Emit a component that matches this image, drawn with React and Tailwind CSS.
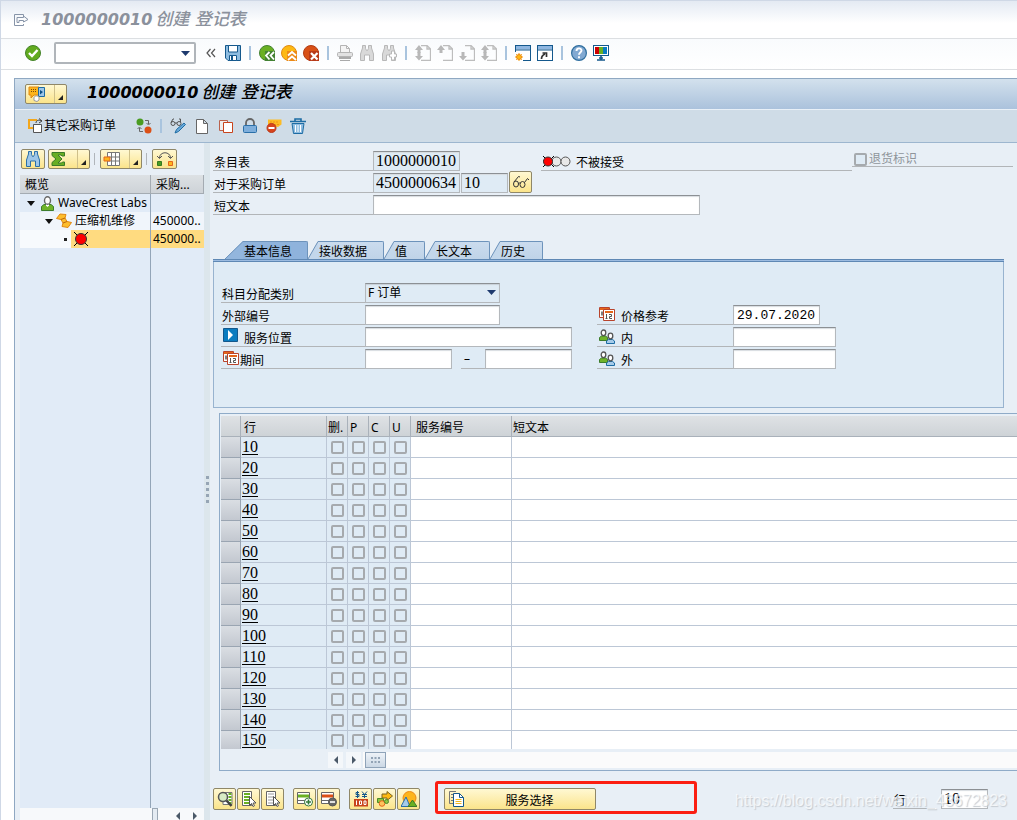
import { useState } from 'react';

const YELLOW_BTN = 'flex items-center justify-center border border-[#8f8768] rounded-[2px] bg-linear-to-b from-[#fff8d2] to-[#fbe48a] cursor-pointer shrink-0';
const FIELD = 'h-5 border border-[#b4b8bc] border-t-[#8c9094] px-[2px] outline-none shrink-0 shadow-[inset_0_1px_1px_#d8dce0] font-["Liberation_Serif"] text-[16px] leading-[18px] rounded-none';
const LABEL = 'flex items-end border-b border-[#b2b5b8] h-[22px] leading-[14px] shrink-0';

function Svg({ children, w = 16, h = 16 }) {
  return (
    <svg width={w} height={h} viewBox={`0 0 ${w} ${h}`} fill="none" aria-hidden="true" className="shrink-0 block">
      {children}
    </svg>
  );
}

const Exit = () => (
  <Svg><path d="M10.500 4V2.500h-9v11h9V12M4 5.500v5M4 5.500h6.500V4L15 7.500 10.500 10V8.500H6v2H4" stroke="#8794a8" /></Svg>
);

const Check = () => (
  <Svg>
    <circle cx="8" cy="8" r="7.500" fill="#62ab20" stroke="#44832a" />
    <path d="M4 8l3 3 5.500-6" stroke="#fff" strokeWidth="2.400" />
  </Svg>
);

const Save = () => (
  <Svg>
    <path d="M.5.500h15v15H3L.5 13z" fill="#8ebce0" stroke="#14588c" />
    <path d="M3.500.500h9v6.500h-9z" fill="#fff" stroke="#14588c" />
    <path d="M4.500 10.500h7v5h-7z" fill="#fff" stroke="#14588c" />
    <path d="M6 11h2v4H6z" fill="#14588c" />
  </Svg>
);

const Back = () => (
  <Svg>
    <circle cx="8" cy="8" r="7.500" fill="#6ab023" stroke="#448233" />
    <path d="M6 6h10v10H6z" fill="#448233" />
    <path d="M10.500 7L7 10.500l3.500 4M15 7l-3.500 3.500 3.500 4" stroke="#fff" strokeWidth="1.800" />
  </Svg>
);

const Up = () => (
  <Svg>
    <circle cx="8" cy="8" r="7.500" fill="#fdb913" stroke="#e08a14" />
    <path d="M6 6h10v10H6z" fill="#ec8a16" />
    <path d="M7 10.500L11 7l4 3.500M7 15l4-3.500 4 3.500" stroke="#fff" strokeWidth="1.800" />
  </Svg>
);

const Cancel = () => (
  <Svg>
    <circle cx="8" cy="8" r="7.500" fill="#d85016" stroke="#b13c14" />
    <path d="M6 6h10v10H6z" fill="#b83a18" />
    <path d="M8 8l6.500 6.500M14.500 8L8 14.500" stroke="#fff" strokeWidth="2.200" />
  </Svg>
);

const Printer = () => (
  <Svg>
    <path d="M3.500 7V.500h6l3 3V7M9.500.500v3h3" stroke="#b4b4b4" fill="#f4f4f4" />
    <rect x=".5" y="7.500" width="15" height="4" rx="1" fill="#e2e2e2" stroke="#b4b4b4" />
    <path d="M2 12h12v2H2zM3 15h10v1H3z" fill="#aaa" />
  </Svg>
);

const Glass = ({ color = '#b8b8b8', fill = '#d9d9d9', plus }) => (
  <Svg>
    <path d="M3.500 3V.500h3v2.800l1 2.200h1l1-2.200V.500h3V3l2 6v6.500h-4V10h-5v5.500h-4V9z" fill={fill} stroke={color} />
    {plus && <path d="M10.500 6h3v3h2v3h-2v3h-3v-3h-2V9h2z" fill="#fff" stroke={color} />}
  </Svg>
);

const PageMove = ({ up, down }) => (
  <Svg>
    <path d="M6 .500h6l3.500 3.500v11.500H6M12 .500V4h3.500" stroke="#bdbdbd" strokeWidth="1.300" />
    {up && <path d="M4 0l4 5H5.500v3h-3V5H0z" fill="#b8b8b8" />}
    {down && <path d="M4 15.500L0 11h2.500V7h3v4H8z" fill="#b8b8b8" />}
  </Svg>
);

const NewWindow = ({ shortcut }) => (
  <Svg>
    <rect x=".5" y=".5" width="15" height="15" fill="#fff" stroke="#14588c" />
    <path d="M1 1h14v3.500H1z" fill="#8eb6e0" />
    <path d="M1 5h14" stroke="#14588c" />
    {shortcut ? (
      <path d="M4.500 14c0-3 1-4 3.500-5M5.500 8h4v4" stroke="#333" strokeWidth="1.700" />
    ) : (
      <>
        <path d="M0 7h8v9H0z" fill="#fff" />
        <path d="M4 8v8M0 12h8M1.200 9.200l5.600 5.600M6.800 9.200l-5.600 5.600" stroke="#f39b12" />
        <circle cx="4" cy="12" r="2.500" fill="#fdb913" stroke="#f08a10" />
      </>
    )}
  </Svg>
);

const Help = () => (
  <Svg>
    <circle cx="8" cy="8" r="7.400" fill="#82a9d2" stroke="#306f9f" strokeWidth="1.200" />
    <path d="M5.500 6c0-3.500 5-3.300 5-.5C10.500 7.500 8 7.500 8 9.800M8 11.200v2" stroke="#fff" strokeWidth="1.900" />
  </Svg>
);

const Monitor = () => (
  <Svg>
    <rect x=".5" y=".5" width="15" height="10" fill="#fff" stroke="#14588c" />
    <path d="M2 2h4v7H2z" fill="#c00" /><path d="M6 2h4v7H6z" fill="#6ab023" /><path d="M10 2h4v7h-4z" fill="#0a7cc0" />
    <path d="M8 11v4M4 15h8M6 13h4" stroke="#14588c" strokeWidth="1.600" />
  </Svg>
);

const OtherPo = () => (
  <Svg>
    <path d="M9 2H1v8h4" stroke="#f3a71c" strokeWidth="2" />
    <path d="M5.500 6.500h8v8h-8z" fill="#fff" stroke="#555" />
    <path d="M8 5c0-3 3-3.500 6-2M11 .500l3 2.500-3 2" stroke="#444" />
  </Svg>
);

const Swap = () => (
  <Svg>
    <circle cx="4" cy="4" r="3.500" fill="#4a9c22" /><circle cx="12" cy="12" r="3.500" fill="#dc5016" />
    <path d="M9 2.500h3.500V6M10.500 5l2 2 2-2M7 13.500H3.500V10M1.500 11l2-2 2 2" stroke="#666" />
  </Svg>
);

const Change = () => (
  <Svg>
    <circle cx="3" cy="5.500" r="2" stroke="#555" /><circle cx="9" cy="5.500" r="2" stroke="#555" />
    <path d="M5 5h2M1 4.500L3 1h1M10.500 4V1H9" stroke="#555" />
    <path d="M14 5l1.500 1.500-7 7L5 15l1.500-3.500z" fill="#69a8d8" stroke="#1d6ca4" />
  </Svg>
);

const Blank = () => <Svg><path d="M2.500 1.500h7l4 4v10h-11zM9.500 1.500v4h4" fill="#fff" stroke="#666" /></Svg>;

const Copy = () => (
  <Svg>
    <path d="M1.500 2.500h8v10h-8z" fill="#eee" stroke="#b9624d" />
    <path d="M5.500 4.500h9v10h-9z" fill="#fff" stroke="#c8441c" />
  </Svg>
);

const Lock = () => (
  <Svg>
    <path d="M4 8V5a4 4 0 018 0v3" stroke="#666" strokeWidth="1.800" />
    <rect x="1.500" y="7.500" width="13" height="7" rx="1" fill="#7eaedb" stroke="#2a6fa8" />
  </Svg>
);

const Stop = () => (
  <Svg>
    <path d="M2 1.500h13.500v5L12 9 2 7z" fill="#fdbb24" />
    <path d="M4 4h9M8 6.500h5" stroke="#f09416" strokeDasharray="2 1" />
    <circle cx="5.500" cy="10" r="4.500" fill="#d8441c" stroke="#b9381a" />
    <path d="M2.500 10h6" stroke="#fff" strokeWidth="2" />
  </Svg>
);

const Trash = () => (
  <Svg>
    <path d="M0 3.500h16M5 3V1h6v2" stroke="#1d6ca4" strokeWidth="1.600" />
    <path d="M2 5.500h12l-1.500 10h-9z" fill="#8ebce0" stroke="#1d6ca4" />
    <path d="M5.500 7v7M8 7v7M10.500 7v7" stroke="#fff" />
  </Svg>
);

const ServiceMenu = () => (
  <Svg w={18}>
    <path d="M1 1h10v8H6l-3 3V9H1z" fill="#fdb51c" stroke="#e08812" />
    <path d="M3 3.500h6M3 5.500h6" stroke="#7a4b10" strokeDasharray="1 1" />
    <path d="M10.500 1.500h6v9h-6z" fill="#9dc6e8" stroke="#1d6ca4" />
    <path d="M12 4l3 2-3 2.500z" fill="#0a4f86" />
    <path d="M6 12c0-2 3-3 5-1v3l-2 1.500-3-1z" fill="#fff" stroke="#999" />
  </Svg>
);

const Sigma = () => (
  <Svg><path d="M1 1.500h12.500v3.500H11l-1-1H7l4 4-4 4h3.500l1-1h2v3.500H1v-3L5 8 1 4.500z" fill="#68ae24" stroke="#3b7a2a" /></Svg>
);

const Columns = () => (
  <Svg w={18}>
    <path d="M4.500 1.500h12v13h-12zM4.500 6h12M4.500 10h12M8.500 1v13M12.500 1v13" fill="#fff" stroke="#777" />
    <path d="M1 6h6v4H1z" fill="#fdb51c" stroke="#e4651a" />
  </Svg>
);

const Exchange = () => (
  <Svg w={18}>
    <path d="M3.500 7C3.500 0 14.500 0 14.500 7M1 5l2.500 2.500L6 5M12 5l2.500 2.500L17 5" stroke="#555" />
    <path d="M1.500 10.500h4v4h-4z" fill="#4a9c22" stroke="#347a22" />
    <path d="M12.500 10.500h4v4h-4z" fill="#fdb51c" stroke="#e4651a" />
  </Svg>
);

const Person = () => (
  <Svg w={13} h={15}>
    <path d="M.5 14.500V10.500L3 8.500h7l2.500 2v4z" fill="#6fb32a" stroke="#3c7d2c" />
    <path d="M5 7h3v2.500l-1.500 1.500L5 9.500z" fill="#fff" />
    <ellipse cx="6.500" cy="4.500" rx="3" ry="3.800" fill="#fff" stroke="#666" strokeWidth="1.400" />
  </Svg>
);

const Folded = () => (
  <Svg>
    <path d="M.5 5.500L4 1l6 .5L9 5l2 3.500 4.500 1L12 14.500l-6-1L7 10 5 6.500z" fill="#fdbd2c" stroke="#e08812" />
    <path d="M9 5L5 6.500M11 8.500L7 10" stroke="#b8640c" />
  </Svg>
);

const RedLight = () => (
  <Svg w={14} h={14}>
    <path d="M0 0l14 14M14 0L0 14" stroke="#000" />
    <circle cx="7" cy="7" r="5.500" fill="#f00" stroke="#333" />
  </Svg>
);

const TrafficLight = () => (
  <Svg w={30} h={13}>
    <path d="M1 1l11 11M12 1L1 12M1 6h11" stroke="#000" />
    <circle cx="14.500" cy="6.500" r="4.500" fill="#e8e8e8" stroke="#555" />
    <circle cx="23.500" cy="6.500" r="4.500" fill="#e8e8e8" stroke="#555" />
    <circle cx="6" cy="6.500" r="4.500" fill="#f00" stroke="#333" />
  </Svg>
);

const Glasses = () => (
  <Svg w={18}>
    <ellipse cx="4" cy="10" rx="2.500" ry="3" stroke="#333" />
    <ellipse cx="10.500" cy="10.500" rx="2.500" ry="3" stroke="#333" />
    <path d="M2 8l4.500-5.500L8 3M6.500 9.500c.5-1 1-1 1.500 0M12.500 8.500l3-4L17 6" stroke="#333" />
  </Svg>
);

const DateIcon = () => (
  <Svg>
    <path d="M.5 1.500h10v10H.5z" fill="#fff" stroke="#b8442c" />
    <path d="M1 3h9" stroke="#e4651a" strokeWidth="2" />
    <path d="M3 5.500v4" stroke="#555" strokeWidth="1.500" />
    <path d="M4.500 3.500h11v11h-11z" fill="#fff" stroke="#b8442c" />
    <path d="M6 6h8" stroke="#e4651a" strokeWidth="2" />
    <path d="M7.500 8v5M6.500 12.500h2M10 8.500h2.500v2H10.500v2H13" stroke="#555" />
  </Svg>
);

const Go = () => (
  <Svg w={15} h={14}>
    <path d="M.5.500h14v13H.5z" fill="#0a7cc0" stroke="#14588c" />
    <path d="M5 2l5 5-5 5z" fill="#fff" />
  </Svg>
);

const People = () => (
  <Svg>
    <path d="M.5 11.500V8.500l2-1.500h4l2 1.500v3z" fill="#6fb32a" stroke="#3c7d2c" />
    <ellipse cx="4.500" cy="3.800" rx="2.300" ry="2.800" fill="#fff" stroke="#555" strokeWidth="1.300" />
    <path d="M7.500 14.500V12l2-1.500h4l2 1.500v2.500z" fill="#a5cbe9" stroke="#1d6ca4" />
    <ellipse cx="11.500" cy="7" rx="2.300" ry="2.800" fill="#fff" stroke="#555" strokeWidth="1.300" />
  </Svg>
);

const Detail = () => (
  <Svg>
    <path d="M6 1.500h9v12H6z" fill="#fff" stroke="#777" />
    <path d="M13 2v11" stroke="#6ab023" strokeWidth="3" strokeDasharray="2 1" />
    <circle cx="6" cy="6" r="4.500" fill="#d8ebc4" stroke="#555" strokeWidth="1.500" />
    <path d="M9.500 9.500l5 5.500" stroke="#444" strokeWidth="2.500" />
  </Svg>
);

const SelectRows = ({ color }) => (
  <Svg>
    <path d="M1.500.500h9v14h-9z" fill="#fff" stroke="#666" />
    <path d="M3 3h6M3 6h6M3 9h6M3 12h5" stroke={color} strokeWidth={color === '#6ab023' ? 2 : 1} />
    <path d="M8.500 5.500v9l2-2 1.500 3 1.500-.8-1.500-2.700h3z" fill="#fff" stroke="#555" />
  </Svg>
);

const RowEdit = ({ minus }) => (
  <Svg>
    <path d="M.5 1.500h12v11H.5z" fill="#fff" stroke="#666" />
    <path d="M1 5h11" stroke={minus ? '#dc5016' : '#6ab023'} strokeWidth="3" />
    <path d="M1 9.500h7" stroke="#666" />
    <circle cx="11.500" cy="11" r="4" fill={minus ? '#666' : '#fff'} stroke={minus ? '#555' : '#347a3a'} />
    <path d={minus ? 'M9 11h5' : 'M9 11h5M11.500 8.500v5'} stroke={minus ? '#fff' : '#347a3a'} strokeWidth="1.600" />
  </Svg>
);

const Price = () => (
  <Svg>
    <path d="M6 1.500H3V3.500h3V5.500H2.500M4.500 0v7M9 .500l2.500 3 2.500-3M11.500 3v4M9 3.500h5M9 5.500h5" stroke="#14588c" />
    <path d="M1 8h14v7.500H1z" fill="#c8441c" />
    <path d="M3.500 9.500v4.500M6.500 10h2v3.500h-2zM11 10h2v3.500h-2z" stroke="#fff" />
  </Svg>
);

const Transfer = () => (
  <Svg>
    <path d="M5 3h5V.500l5.500 4.500L10 9.500V7H5z" fill="#fdb913" stroke="#7a6420" />
    <path d="M.5 7.500h6v4h-6z" fill="#8cc63f" stroke="#4c8a28" />
    <circle cx="5" cy="12.500" r="2.800" fill="#fdc35c" stroke="#e4651a" /><circle cx="9.500" cy="10.500" r="2" fill="#8cc63f" stroke="#4c8a28" />
  </Svg>
);

const Landscape = () => (
  <Svg>
    <circle cx="8.500" cy="7" r="6.500" fill="#fdb51c" stroke="#ec8a16" />
    <path d="M0 15.500L5 6l4 9.500z" fill="#a5cbe9" stroke="#2a6fa8" /><path d="M7 15.500L11.500 9l4.500 6.500z" fill="#6ab023" stroke="#3b7a2a" />
  </Svg>
);

const Documents = () => (
  <Svg>
    <path d="M8 12.500H1.500v-12H8M3 3.500h2M3 6.500h2M3 9.500h2" stroke="#777" />
    <path d="M5.500 2.500h6l4 4v9h-10z" fill="#fff" stroke="#14588c" />
    <path d="M11.500 2.500v4h4" stroke="#14588c" />
    <path d="M7.500 8.500h6M7.500 10.500h6M7.500 12.500h6" stroke="#f3b71c" />
  </Svg>
);

const Arrow = ({ d }) => <Svg w={6} h={8}><path d={d} fill="#4a5968" /></Svg>;
const LEFT = 'M5 0v8L1 4z';
const RIGHT = 'M1 0v8l4-4z';

function IconBtn({ label, children }) {
  return <button type="button" aria-label={label} className="cursor-pointer shrink-0">{children}</button>;
}

const Sep = () => <span className="w-[2px] h-[14px] mx-[2px] bg-[#a9c4de] shrink-0" />;

function SystemBar() {
  return (
    <div className="h-[31px] pb-[2px] border-b border-[#dcdfe2] bg-linear-to-b from-[#f9fbfd] to-white flex items-center gap-[6px] pl-6">
      <IconBtn label="确认"><Check /></IconBtn>
      <div className="relative ml-[7px] mr-1">
        <select aria-label="命令" className="appearance-none block w-[142px] h-[22px] border-2 border-[#b0b5ba] rounded-[2px] bg-white outline-none">
          <option></option>
        </select>
        <svg width="9" height="5" className="absolute right-[6px] top-[9px] pointer-events-none"><path d="M0 0h9L4.500 5z" fill="#1e3a6e" /></svg>
      </div>
      <IconBtn label="收起">
        <Svg w={13}><path d="M4.500 4L1 8l3.500 4M9 4L5.500 8 9 12" stroke="#555" strokeWidth="1.200" /></Svg>
      </IconBtn>
      <IconBtn label="保存"><Save /></IconBtn>
      <Sep />
      <IconBtn label="返回"><Back /></IconBtn>
      <IconBtn label="退出"><Up /></IconBtn>
      <IconBtn label="取消"><Cancel /></IconBtn>
      <Sep />
      <IconBtn label="打印"><Printer /></IconBtn>
      <IconBtn label="查找"><Glass /></IconBtn>
      <IconBtn label="继续查找"><Glass plus /></IconBtn>
      <Sep />
      <IconBtn label="首页"><PageMove up down /></IconBtn>
      <IconBtn label="上一页"><PageMove up /></IconBtn>
      <IconBtn label="下一页"><PageMove down /></IconBtn>
      <IconBtn label="末页"><PageMove up down /></IconBtn>
      <Sep />
      <IconBtn label="新建会话"><NewWindow /></IconBtn>
      <IconBtn label="快捷方式"><NewWindow shortcut /></IconBtn>
      <Sep />
      <IconBtn label="帮助"><Help /></IconBtn>
      <IconBtn label="定制布局"><Monitor /></IconBtn>
    </div>
  );
}

function SplitButton({ label, children }) {
  return (
    <button type="button" aria-label={label} className={`${YELLOW_BTN} w-[42px] h-5`}>
      <span className="flex-1 flex items-center pl-[2px]">{children}</span>
      <span className="w-3 h-full border-l border-[#cfc08a] flex items-end justify-center pb-[3px]">
        <svg width="5" height="5"><path d="M5 0v5H0z" fill="#222" /></svg>
      </span>
    </button>
  );
}

function AppBar() {
  return (
    <div className="h-[33px] flex items-center gap-2 pl-[13px] border-b border-[#9db6cf] bg-[#cfdce7]">
      <button type="button" className="flex items-center mr-3 text-[12px] cursor-pointer"><OtherPo />其它采购订单</button>
      <IconBtn label="切换"><Swap /></IconBtn>
      <span className="w-[2px] h-[14px] bg-[#a9c4de]" />
      <IconBtn label="显示/更改"><Change /></IconBtn>
      <IconBtn label="新建"><Blank /></IconBtn>
      <IconBtn label="复制"><Copy /></IconBtn>
      <IconBtn label="锁定"><Lock /></IconBtn>
      <IconBtn label="停止"><Stop /></IconBtn>
      <IconBtn label="删除"><Trash /></IconBtn>
    </div>
  );
}

const Caret = () => <svg width="8" height="5" className="shrink-0"><path d="M0 0h8L4 5z" fill="#111" /></svg>;

function TreePanel() {
  return (
    <div className="w-[184px] shrink-0 ml-[5px] flex flex-col">
      <div className="h-8 pt-[6px] pl-px flex items-start gap-[3px]">
        <button type="button" aria-label="查找" className={`${YELLOW_BTN} w-6 h-5`}><Glass color="#2a6fa8" fill="#9dc6e8" /></button>
        <SplitButton label="合计"><Sigma /></SplitButton>
        <span className="w-px h-3 mt-1 ml-px mr-[2px] bg-[#b0b5ba]" />
        <SplitButton label="布局"><Columns /></SplitButton>
        <span className="w-px h-3 mt-1 ml-px mr-[2px] bg-[#b0b5ba]" />
        <button type="button" aria-label="转换" className={`${YELLOW_BTN} w-[25px] h-5`}><Exchange /></button>
      </div>
      <table className="table-fixed w-full border-separate border-spacing-0 text-[12px] leading-4">
        <thead>
          <tr className="h-[19px] bg-linear-to-b from-[#dde1e4] to-[#cdd2d7]">
            <th className="w-[131px] p-0 pt-[2px] pl-[5px] text-left font-normal border-r border-b border-[#a4abb2]">概览</th>
            <th className="p-0 pt-[2px] pl-[5px] text-left font-normal border-r border-b border-[#a4abb2]">采购...</th>
          </tr>
        </thead>
        <tbody>
          <tr className="h-[18px] bg-[#e1ebf7]">
            <td className="p-0 border-r border-[#93a5b8]">
              <div className="flex items-center gap-1 pl-[7px] whitespace-nowrap"><Caret /><span className="pl-[2px]"><Person /></span>WaveCrest Labs</div>
            </td>
            <td className="p-0" />
          </tr>
          <tr className="h-[18px] bg-[#f0f5fb]">
            <td className="p-0 border-r border-[#93a5b8]">
              <div className="flex items-center gap-[3px] pl-[25px] whitespace-nowrap"><Caret /><Folded />压缩机维修</div>
            </td>
            <td className="p-0 pl-[2px] overflow-hidden">450000..</td>
          </tr>
          <tr className="h-[18px] bg-[#ffdb80]">
            <td className="p-0 border-r border-[#93a5b8]">
              <div className="flex items-center h-[18px]">
                <div className="w-[51px] h-full bg-[#f7fafd] flex items-center justify-end pr-1"><span className="size-[3px] bg-[#222]" /></div>
                <span className="pl-[3px]"><RedLight /></span>
              </div>
            </td>
            <td className="p-0 pl-[2px] overflow-hidden">450000..</td>
          </tr>
        </tbody>
      </table>
      <div className="flex-1 flex bg-[#e1ebf7]"><div className="w-[131px] border-r border-[#93a5b8]" /></div>
      <div className="h-3 bg-[#f7f9fb] flex items-end shrink-0">
        <div className="ml-[132px] mr-[17px] w-[6px] h-full border border-b-0 border-[#9aa7b4] bg-[#e4ebf2]" />
        <Arrow d={LEFT} />
        <span className="w-[11px]" />
        <Arrow d={RIGHT} />
      </div>
    </div>
  );
}

function HeaderForm() {
  return (
    <div className="pt-[6px] pl-[3px]">
      <div className="flex items-end">
        <label htmlFor="sheet" className={`${LABEL} w-40 pl-px`}>条目表</label>
        <input id="sheet" readOnly defaultValue="1000000010" className={`${FIELD} w-[87px] bg-[#dfebf5]`} />
        <div className={`${LABEL} ml-[81px] w-[311px] gap-1`}>
          <span className="pb-[2px] pl-px"><TrafficLight /></span>不被接受
        </div>
        <label className="flex-1 mr-1 mb-1 flex items-end border-b border-[#b2b5b8] h-[18px] leading-[14px] text-[#8f959b]">
          <input type="checkbox" disabled className="appearance-none size-[13px] mx-[2px] border-2 border-[#a6aaae] rounded-[2px] bg-[#dfebf5] shrink-0" />
          <span>退货标识</span>
        </label>
      </div>
      <div className="flex items-end h-[22px]">
        <label htmlFor="po" className={`${LABEL} w-40 pl-px`}>对于采购订单</label>
        <input id="po" readOnly defaultValue="4500000634" className={`${FIELD} w-[87px] bg-[#dfebf5]`} />
        <input aria-label="项目" readOnly defaultValue="10" className={`${FIELD} w-[47px] ml-px mr-px bg-[#dfebf5]`} />
        <button type="button" aria-label="显示采购订单" className={`${YELLOW_BTN} w-[23px] h-[22px]`}><Glasses /></button>
      </div>
      <div className="flex items-end">
        <label htmlFor="short" className={`${LABEL} w-40 pl-px`}>短文本</label>
        <input id="short" className={`${FIELD} w-[327px] bg-white`} />
      </div>
    </div>
  );
}

const TABS = [
  { name: '基本信息', width: 'w-[65px]' },
  { name: '接收数据', width: 'w-[66px]' },
  { name: '值', width: 'w-[31px]' },
  { name: '长文本', width: 'w-[55px]' },
  { name: '历史', width: 'w-[43px]' },
];

function Tabs() {
  const [active, setActive] = useState(0);
  return (
    <div role="tablist" className="mt-[26px] pl-[15px] h-[18px] flex">
      {TABS.map((tab, i) => {
        const on = i === active;
        const w = on ? 18 : 10;
        return (
          <div key={tab.name} className="flex">
            <svg width={w} height="18" className="block shrink-0">
              <path d={`M0 18L${w} 0V18z`} fill={on ? '#93b6dd' : '#c3d7eb'} />
              <path d={`M0 18L${w} .5`} stroke="#6d93bb" />
            </svg>
            <button
              type="button"
              role="tab"
              aria-selected={on}
              onClick={() => setActive(i)}
              className={`${tab.width} h-[18px] pt-[3px] pl-px text-left text-[12px] leading-[14px] whitespace-nowrap border-t border-r border-[#6d93bb] rounded-tr-[2px] cursor-pointer ${on ? 'bg-[#8fb3dc]' : 'bg-linear-to-b from-[#cbdcee] to-[#bfd3e8]'}`}
            >
              {tab.name}
            </button>
          </div>
        );
      })}
    </div>
  );
}

function BasicData() {
  return (
    <div className="mr-[13px] ml-[3px] border border-t-0 border-[#98b3cf] bg-[#dfebf5]">
      <div className="h-[3px] -mx-px bg-[#9cbbe0] border-y border-[#5f88b4]" />
      <div className="pt-[19px] pb-[38px] pl-[7px] flex">
        <div className="w-[376px] shrink-0">
          <div className="flex items-end">
            <label htmlFor="acct" className={`${LABEL} w-36 pl-px`}>科目分配类别</label>
            <div className="relative">
              <select id="acct" className="appearance-none block w-[135px] h-5 pl-[2px] text-[12px] leading-4 border border-[#b4b8bc] border-t-[#8c9094] outline-none shadow-[inset_0_1px_1px_#c8d0d8]">
                <option>F 订单</option>
              </select>
              <svg width="9" height="5" className="absolute right-1 top-[7px] pointer-events-none"><path d="M0 0h9L4.500 5z" fill="#1e3a6e" /></svg>
            </div>
          </div>
          <div className="flex items-end">
            <label htmlFor="ext" className={`${LABEL} w-36 pl-px`}>外部编号</label>
            <input id="ext" className={`${FIELD} w-[135px] bg-white`} />
          </div>
          <div className="flex items-end">
            <label htmlFor="loc" className={`${LABEL} w-36 pl-[2px] gap-[6px]`}><span className="pb-1"><Go /></span>服务位置</label>
            <input id="loc" className={`${FIELD} w-[207px] bg-white`} />
          </div>
          <div className="flex items-end">
            <label htmlFor="from" className={`${LABEL} w-36 pl-[2px] gap-px`}><span className="pb-[2px]"><DateIcon /></span>期间</label>
            <input id="from" className={`${FIELD} w-[87px] bg-white`} />
            <label htmlFor="to" className={`${LABEL} w-6 ml-[9px] pl-[3px] pb-[2px]`}>–</label>
            <input id="to" className={`${FIELD} w-[87px] bg-white`} />
          </div>
        </div>
        <div className="pt-[22px]">
          <div className="flex items-end">
            <label htmlFor="price" className={`${LABEL} w-[136px] pl-[2px] gap-[6px]`}><span className="pb-[2px]"><DateIcon /></span>价格参考</label>
            <input id="price" defaultValue="29.07.2020" className="w-[87px] h-5 px-[3px] bg-white border border-[#b4b8bc] border-t-[#8c9094] outline-none shadow-[inset_0_1px_1px_#d8dce0] font-['Liberation_Mono',monospace] text-[13px] leading-[18px]" />
          </div>
          <div className="flex items-end">
            <label htmlFor="inner" className={`${LABEL} w-[136px] pl-[2px] gap-[6px]`}><span className="pb-px"><People /></span>内</label>
            <input id="inner" className={`${FIELD} w-[103px] bg-white`} />
          </div>
          <div className="flex items-end">
            <label htmlFor="outer" className={`${LABEL} w-[136px] pl-[2px] gap-[6px]`}><span className="pb-px"><People /></span>外</label>
            <input id="outer" className={`${FIELD} w-[103px] bg-white`} />
          </div>
        </div>
      </div>
    </div>
  );
}

const LINES = Array.from({ length: 15 }, (_, i) => (i + 1) * 10);
const FLAGS = ['删', 'P', 'C', 'U'];
const TH = 'p-0 pt-[3px] text-left font-normal border-r border-[#a9b1ba] whitespace-nowrap';

function ServiceTable() {
  return (
    <div className="ml-[9px] mt-[5px] pt-[2px] pl-px border border-r-0 border-[#8fabc8]">
      <table className="table-fixed w-full border-separate border-spacing-0 text-[12px] leading-4">
        <thead>
          <tr className="h-[21px] bg-linear-to-b from-[#dfe2e5] to-[#cdd2d6] *:border-b">
            <th className={`${TH} w-5`} />
            <th className={`${TH} w-[86px] pl-[3px]`}>行</th>
            <th className={`${TH} w-[21px] pl-px`}>删.</th>
            <th className={`${TH} w-[21px] pl-[2px]`}>P</th>
            <th className={`${TH} w-[21px] pl-[2px]`}>C</th>
            <th className={`${TH} w-[21px] pl-[2px]`}>U</th>
            <th className={`${TH} w-[101px] pl-[5px]`}>服务编号</th>
            <th className={`${TH} pl-px border-r-0`}>短文本</th>
          </tr>
        </thead>
        <tbody>
          {LINES.map((n) => (
            <tr key={n} className="h-[21px] last:h-[18px] *:p-0 *:border-b *:border-[#bcc7d6] last:*:border-b-0 bg-white">
              <td className="border-r bg-linear-to-b from-[#dadee3] to-[#c3c8d0] border-[#9aa5b2]!" />
              <td className="border-r bg-[#dfebf5]">
                <a href="#" className="block pl-px w-fit font-['Liberation_Serif',serif] text-[16px] leading-[18px] underline underline-offset-2">{n}</a>
              </td>
              {FLAGS.map((f) => (
                <td key={f} className="border-r bg-[#dfebf5]">
                  <input type="checkbox" aria-label={`${f} ${n}`} className="appearance-none block mx-auto size-[13px] border-2 border-[#a6aaae] rounded-[2px]" />
                </td>
              ))}
              <td className="border-r" />
              <td />
            </tr>
          ))}
        </tbody>
      </table>
      <div className="mt-[3px] mb-[2px] h-4 pl-[107px] flex items-center">
        <span className="w-[15px] h-full bg-[#f4f7fa] flex items-center justify-center"><Arrow d={LEFT} /></span>
        <span className="w-[15px] h-full ml-[3px] bg-[#f4f7fa] flex items-center justify-center"><Arrow d={RIGHT} /></span>
        <div className="flex-1 h-full ml-[2px] pl-[2px] bg-[#fbfbfb]">
          <div className="w-[21px] h-full border border-[#8fa3b8] bg-linear-to-b from-[#eef3f8] to-[#cbd8e5] flex items-center justify-center">
            <svg width="9" height="6"><path d="M0 1h9M0 5h9" stroke="#92a3b5" strokeWidth="2" strokeDasharray="2 1.500" /></svg>
          </div>
        </div>
      </div>
    </div>
  );
}

function ToolBtn({ label, children }) {
  return <button type="button" aria-label={label} className={`${YELLOW_BTN} w-[23px] h-[22px]`}>{children}</button>;
}

function BottomBar() {
  return (
    <div className="relative pl-[3px] pt-[10px] pb-[5px] flex items-start overflow-hidden">
      <div className="flex pt-[7px] gap-[9px]">
        <div className="flex gap-px">
          <ToolBtn label="明细"><Detail /></ToolBtn>
          <ToolBtn label="全选"><SelectRows color="#6ab023" /></ToolBtn>
          <ToolBtn label="取消全选"><SelectRows color="#999" /></ToolBtn>
        </div>
        <div className="flex gap-px">
          <ToolBtn label="插入行"><RowEdit /></ToolBtn>
          <ToolBtn label="删除行"><RowEdit minus /></ToolBtn>
        </div>
        <div className="flex gap-px">
          <ToolBtn label="条件"><Price /></ToolBtn>
          <ToolBtn label="转移"><Transfer /></ToolBtn>
          <ToolBtn label="概览图"><Landscape /></ToolBtn>
        </div>
      </div>
      <div className="ml-[15px] w-[262px] h-[33px] shrink-0 border-[3px] border-[#fb1e12] rounded-[3px] pt-1 pl-[6px]">
        <button type="button" className={`${YELLOW_BTN} w-[152px] h-[22px] text-[12px]`}>
          <span className="pl-[3px]"><Documents /></span>
          <span className="flex-1 text-center pt-[3px]">服务选择</span>
        </button>
      </div>
      <div className="ml-auto mr-[29px] pt-[6px] flex items-end">
        <label htmlFor="line" className={`${LABEL} w-[42px] pl-px mr-[6px]`}>行</label>
        <input id="line" defaultValue="10" className={`${FIELD} w-[47px] bg-white`} />
      </div>
      <span className="absolute right-[10px] top-5 font-['Liberation_Sans',sans-serif] text-[16px] leading-5 text-white/70 [text-shadow:1px_1px_1px_#c4cad0] pointer-events-none">
        https://blog.csdn.net/weixin_43672823
      </span>
    </div>
  );
}

const TITLE = 'flex items-baseline gap-[3px] font-bold italic text-[16px] leading-5 font-["DejaVu_Sans","Noto_Sans_CJK_SC",sans-serif] whitespace-nowrap';

export default function App() {
  return (
    <div className="min-h-screen flex flex-col overflow-hidden bg-white border-l border-[#cfd8e6] text-[12px] leading-[18px] text-black font-['Noto_Sans','Noto_Sans_CJK_SC',sans-serif]">
      <header className="h-[39px] border-t border-b border-t-[#cfd8e6] border-b-[#dcdfe2] bg-linear-to-b from-[#e4eaf3] to-white to-60% flex items-center gap-3 pl-3">
        <Exit />
        <div className={`${TITLE} text-[#8b919c]`}>1000000010<span className="text-[17px] font-medium">创建 登记表</span></div>
      </header>
      <SystemBar />
      <main className="mt-2 ml-[13px] flex-1 flex flex-col border-t border-l border-[#8fa8c2] bg-[#e8eff6]">
        <div className="h-[31px] border-b border-[#e9f0f7] bg-linear-to-b from-[#d3e1ed] to-[#abc2dc] flex items-center gap-5 pl-[10px]">
          <SplitButton label="服务菜单"><ServiceMenu /></SplitButton>
          <h1 className={`${TITLE} pb-1`}>1000000010<span className="text-[17px] font-medium">创建 登记表</span></h1>
        </div>
        <AppBar />
        <div className="flex-1 flex">
          <TreePanel />
          <div className="w-[6px] shrink-0 bg-[#dce6ec] flex flex-col items-center gap-[3px] pt-[333px]">
            {[0, 1, 2, 3, 4].map((i) => <span key={i} className="size-[3px] bg-[#96a5b5] shrink-0" />)}
          </div>
          <div className="flex-1 min-w-0 flex flex-col">
            <HeaderForm />
            <Tabs />
            <BasicData />
            <ServiceTable />
            <BottomBar />
          </div>
        </div>
      </main>
    </div>
  );
}
